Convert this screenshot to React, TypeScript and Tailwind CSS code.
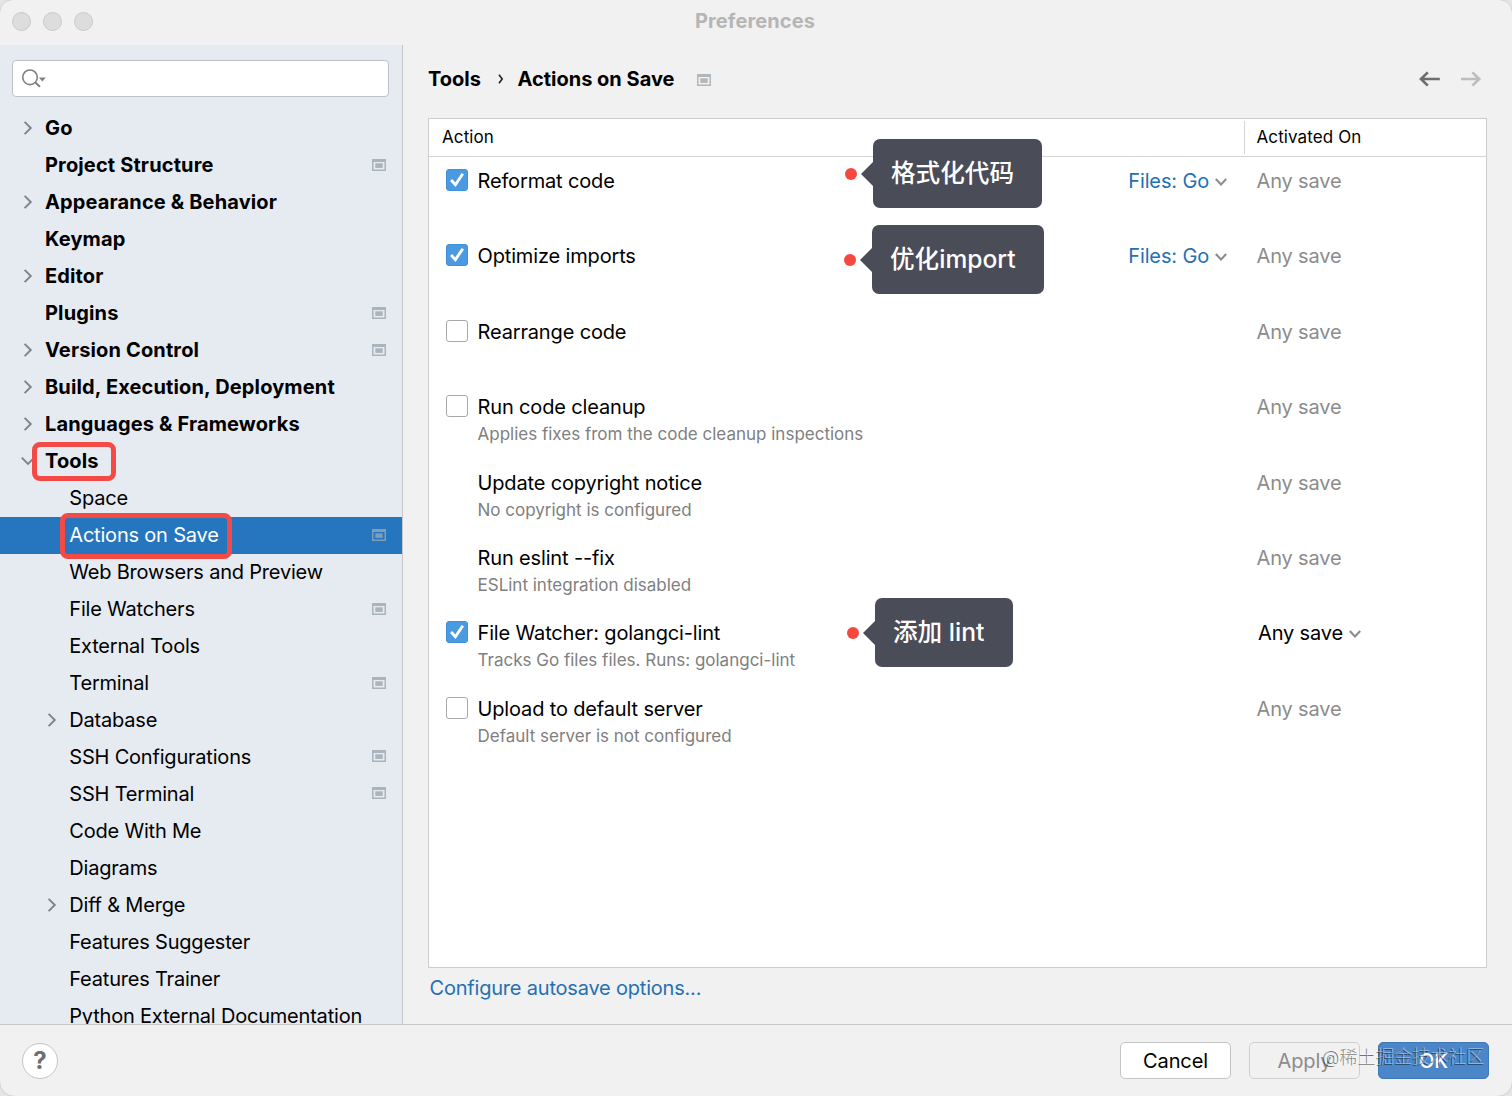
import React from 'react';

type TreeItem = {
  label: string;
  level: 0 | 1;
  arrow?: 'right' | 'down';
  badge?: boolean;
  selected?: boolean;
  mark?: string;
};

const treeItems: TreeItem[] = [
  { label: 'Go', level: 0, arrow: 'right' },
  { label: 'Project Structure', level: 0, badge: true },
  { label: 'Appearance & Behavior', level: 0, arrow: 'right' },
  { label: 'Keymap', level: 0 },
  { label: 'Editor', level: 0, arrow: 'right' },
  { label: 'Plugins', level: 0, badge: true },
  { label: 'Version Control', level: 0, arrow: 'right', badge: true },
  { label: 'Build, Execution, Deployment', level: 0, arrow: 'right' },
  { label: 'Languages & Frameworks', level: 0, arrow: 'right' },
  { label: 'Tools', level: 0, arrow: 'down', mark: 'left-[32px] -top-[0.5px] w-[83.5px] h-[38.5px]' },
  { label: 'Space', level: 1 },
  { label: 'Actions on Save', level: 1, badge: true, selected: true, mark: 'left-[60px] -top-[4px] w-[172px] h-[46px]' },
  { label: 'Web Browsers and Preview', level: 1 },
  { label: 'File Watchers', level: 1, badge: true },
  { label: 'External Tools', level: 1 },
  { label: 'Terminal', level: 1, badge: true },
  { label: 'Database', level: 1, arrow: 'right' },
  { label: 'SSH Configurations', level: 1, badge: true },
  { label: 'SSH Terminal', level: 1, badge: true },
  { label: 'Code With Me', level: 1 },
  { label: 'Diagrams', level: 1 },
  { label: 'Diff & Merge', level: 1, arrow: 'right' },
  { label: 'Features Suggester', level: 1 },
  { label: 'Features Trainer', level: 1 },
  { label: 'Python External Documentation', level: 1 },
];

type Action = {
  title: string;
  note?: string;
  checked?: boolean;
  files?: string;
  editable?: boolean;
};

const actions: Action[] = [
  { title: 'Reformat code', checked: true, files: 'Files: Go' },
  { title: 'Optimize imports', checked: true, files: 'Files: Go' },
  { title: 'Rearrange code', checked: false },
  { title: 'Run code cleanup', checked: false, note: 'Applies fixes from the code cleanup inspections' },
  { title: 'Update copyright notice', note: 'No copyright is configured' },
  { title: 'Run eslint --fix', note: 'ESLint integration disabled' },
  { title: 'File Watcher: golangci-lint', checked: true, note: 'Tracks Go files files. Runs: golangci-lint', editable: true },
  { title: 'Upload to default server', checked: false, note: 'Default server is not configured' },
];

const ProjectBadge = ({ className = '' }: { className?: string }) => (
  <svg width="14" height="12" viewBox="0 0 14 12" className={className}>
    <path d="M0 0h14v12H0zM1.5 3v7.5h11V3z" fill="currentColor" fillRule="evenodd" />
    <path d="M3.3 4.3h7.4v4.6H3.3z" fill="currentColor" />
  </svg>
);

const ChevronSmall = ({ className = '' }: { className?: string }) => (
  <svg width="12" height="8" viewBox="0 0 12 8" fill="none" className={className}>
    <path d="M0.8 1l5.2 5.4L11.2 1" stroke="#8c8c8c" strokeWidth="2.1" />
  </svg>
);

const TreeArrow = ({ dir }: { dir: 'right' | 'down' }) => (
  <svg width="14" height="14" viewBox="0 0 14 14" fill="none">
    <path d={dir === 'right' ? 'M3.6 0.8l6.2 6.2-6.2 6.2' : 'M0.8 3.6l6.2 6.2 6.2-6.2'} stroke="#7f8388" strokeWidth="1.9" />
  </svg>
);

const Checkbox = ({ checked }: { checked: boolean }) =>
  checked ? (
    <div className="w-[22px] h-[22px] rounded-[3px] bg-[#4a9ae2] border border-[#438fd6] flex items-center justify-center">
      <svg width="20" height="20" viewBox="0 0 20 20" fill="none">
        <path d="M4.1 10.1l4.3 4.6 7.4-11" stroke="#fff" strokeWidth="2.9" />
      </svg>
    </div>
  ) : (
    <div className="w-[22px] h-[22px] rounded-[3px] bg-white border-[1.5px] border-[#a9a9a9]" />
  );

const Callout = ({ text, className }: { text: string; className: string }) => (
  <div className={`absolute flex items-center ${className}`}>
    <div className="w-3 h-3 rounded-full bg-[#f5483f] mr-1 mt-[1px]" />
    <svg width="12" height="24" viewBox="0 0 12 24" className="mt-[1px]">
      <path d="M12 0v24L0 12z" fill="#4a4c57" />
    </svg>
    <div className="flex-1 h-[69px] rounded-[7px] bg-[#4a4c57] text-white text-[24.6px] font-medium pl-[18px] flex items-center whitespace-pre">
      {text}
    </div>
  </div>
);

const Sidebar = () => (
  <aside className="w-[403px] shrink-0 bg-[#e6eaf1] border-r border-[#c6c8cb] overflow-hidden flex flex-col">
    <div className="mt-[15px] ml-3 w-[377px] h-[37px] shrink-0 bg-white border-[1.5px] border-[#c0c1c4] rounded-[4px] flex items-center pl-[7.5px]">
      <svg width="28" height="22" viewBox="0 0 28 22" fill="none">
        <circle cx="9" cy="9.3" r="7.3" stroke="#7d8084" strokeWidth="1.6" />
        <path d="M14 14.2l5 4.6" stroke="#7d8084" strokeWidth="2" />
        <path d="M17.8 9.5h7L21.3 13.5z" fill="#7d8084" />
      </svg>
    </div>
    <div className="mt-[13px] flex flex-col">
      {treeItems.map((item) => (
        <div
          key={item.label}
          className={`relative h-[36.97px] shrink-0 flex items-center text-[20px] ${
            item.level === 0 ? 'pl-[21px] font-bold tracking-[0.14px]' : 'pl-[45.3px] tracking-[-0.2px]'
          } ${item.selected ? 'bg-[#2675bf] text-white' : 'text-black'}`}
        >
          <div className="w-6 shrink-0">{item.arrow && <TreeArrow dir={item.arrow} />}</div>
          <span className="flex-1 whitespace-nowrap">{item.label}</span>
          {item.badge && (
            <ProjectBadge className={`mr-4 -mt-px ${item.selected ? 'text-[#7f9db8]' : 'text-[#a9b4bd]'}`} />
          )}
          {item.mark && <div className={`absolute z-10 border-[5.5px] border-[#f44a45] rounded-[8px] ${item.mark}`} />}
        </div>
      ))}
    </div>
  </aside>
);

const ActionRow = ({ action }: { action: Action }) => (
  <div className="h-[75.4px] flex items-start pt-[9px] text-[20px] leading-[30px] tracking-[-0.15px]">
    <div className="w-[48.5px] pl-[17px] pt-[3px] shrink-0">
      {action.checked !== undefined && <Checkbox checked={action.checked} />}
    </div>
    <div className="flex-1 flex flex-col">
      <span className="text-black">{action.title}</span>
      {action.note && <span className="text-[17px] leading-6 text-[#808080] tracking-normal">{action.note}</span>}
    </div>
    {action.files && (
      <div className="flex items-center text-[#2470b3] mr-[29.5px]">
        {action.files}
        <ChevronSmall className="ml-[6px] mt-[2px]" />
      </div>
    )}
    <div className={`w-[229.5px] shrink-0 flex items-center ${action.editable ? 'pl-[1.5px] text-black' : 'text-[#8c8c8c]'}`}>
      Any save
      {action.editable && <ChevronSmall className="ml-[6px] mt-[2px]" />}
    </div>
  </div>
);

export default function App() {
  return (
    <div className="w-[1512px] h-[1096px] bg-[#e4e4e4] overflow-hidden font-['Inter','Noto_Sans_CJK_SC',sans-serif]">
      <div className="relative w-full h-full bg-[#f1f1f1] rounded-t-[14px] rounded-b-[16px] border border-[#d2d2d2] overflow-hidden flex flex-col -m-px box-content">
        {/* Title bar */}
        <div className="h-[45px] shrink-0 flex items-center relative pl-3">
          <div className="flex gap-3 -mt-[2px]">
            <div className="w-[19px] h-[19px] rounded-full bg-[#dddddd] border border-[#c9c9c9]" />
            <div className="w-[19px] h-[19px] rounded-full bg-[#dddddd] border border-[#c9c9c9]" />
            <div className="w-[19px] h-[19px] rounded-full bg-[#dddddd] border border-[#c9c9c9]" />
          </div>
          <span className="flex-1 text-center pr-[95px] -mt-1 text-[20px] font-bold tracking-[0.1px] text-[#b5b5b5]">Preferences</span>
        </div>

        <div className="h-[979px] shrink-0 flex">
          <Sidebar />

          <main className="flex-1 pl-[25px] pr-[25px] flex flex-col">
            <div className="h-[73px] shrink-0 flex items-center text-[20px] font-bold text-black pb-[5px]">
              <span>Tools</span>
              <svg width="6" height="10" viewBox="0 0 6 10" fill="none" className="ml-[17px] mr-[13.5px]">
                <path d="M1 0.8L4.2 5 1 9.2" stroke="#222" strokeWidth="1.6" />
              </svg>
              <span>Actions on Save</span>
              <ProjectBadge className="ml-[23px] mt-[2px] text-[#b0b6ba]" />
              <div className="ml-auto flex gap-5 mr-[5px] -mt-px">
                <svg width="22" height="16" viewBox="0 0 22 16" fill="none" stroke="#6e6e6e" strokeWidth="2.7">
                  <path d="M2.8 8h19M9.8 1.4L3 8l6.8 6.6" />
                </svg>
                <svg width="22" height="16" viewBox="0 0 22 16" fill="none" stroke="#bdbdbd" strokeWidth="2.7">
                  <path d="M1 8h19M12.4 1.4L19.2 8l-6.8 6.6" />
                </svg>
              </div>
            </div>

            <div className="h-[850px] shrink-0 bg-white border-[1.5px] border-[#cdcdcd]">
              <div className="h-[38px] border-b-[1.5px] border-[#d4d4d4] flex text-[17px] text-black tracking-[0.1px]">
                <div className="flex-1 pl-[13px] pt-px flex items-center">Action</div>
                <div className="w-[242px] mt-[2px] mb-[2px] border-l-[1.5px] border-[#d4d4d4] pl-[11.5px] pt-px flex items-center">
                  Activated On
                </div>
              </div>
              {actions.map((action) => (
                <ActionRow key={action.title} action={action} />
              ))}
            </div>
            <a className="mt-[5px] ml-[1.5px] text-[20px] leading-[30px] tracking-[-0.2px] text-[#2470b3]">Configure autosave options...</a>
          </main>
        </div>

        {/* Footer */}
        <footer className="flex-1 border-t-[1.5px] border-[#c9c9c9] flex items-center pl-[22px] pr-[23px] text-[20px]">
          <div className="w-9 h-9 rounded-full bg-white border-[1.5px] border-[#c4c4c4] flex items-center justify-center text-[24px] font-bold text-[#6e6e6e]">
            ?
          </div>
          <div className="ml-auto flex gap-[18px] tracking-[-0.1px]">
            <button className="w-[111px] h-[37px] rounded-[5px] bg-white border-[1.5px] border-[#c4c4c4] text-black">Cancel</button>
            <button className="w-[111px] h-[37px] rounded-[5px] border-[1.5px] border-[#cfcfcf] text-[#8c8c8c]">Apply</button>
            <button className="w-[111px] h-[37px] rounded-[5px] bg-[#4a86c8] border border-[#3f78b8] text-white font-medium">OK</button>
          </div>
        </footer>

        <Callout text="格式化代码" className="left-[845px] top-[139px] w-[197px]" />
        <Callout text="优化import" className="left-[844px] top-[225px] w-[200px]" />
        <Callout text="添加 lint" className="left-[847px] top-[598px] w-[166px]" />

        <div className="absolute left-[1323px] top-[1043px] text-[18px] leading-[27px] font-light text-white/45 whitespace-nowrap [text-shadow:-1px_1px_0_#00000088]">
          @稀土掘金技术社区
        </div>
      </div>
    </div>
  );
}
